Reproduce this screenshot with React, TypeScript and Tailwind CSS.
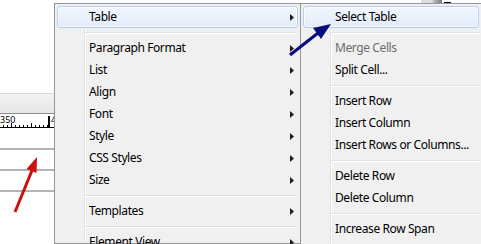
import clsx from 'clsx'

type Entry = { label: string; arrow?: boolean; hl?: boolean; disabled?: boolean } | 'sep'

const MAIN: Entry[] = [
  { label: 'Table', arrow: true, hl: true },
  'sep',
  { label: 'Paragraph Format', arrow: true },
  { label: 'List', arrow: true },
  { label: 'Align', arrow: true },
  { label: 'Font', arrow: true },
  { label: 'Style', arrow: true },
  { label: 'CSS Styles', arrow: true },
  { label: 'Size', arrow: true },
  'sep',
  { label: 'Templates', arrow: true },
  'sep',
  { label: 'Element View', arrow: true },
]

const SUB: Entry[] = [
  { label: 'Select Table', hl: true },
  'sep',
  { label: 'Merge Cells', disabled: true },
  { label: 'Split Cell...' },
  'sep',
  { label: 'Insert Row' },
  { label: 'Insert Column' },
  { label: 'Insert Rows or Columns...' },
  'sep',
  { label: 'Delete Row' },
  { label: 'Delete Column' },
  'sep',
  { label: 'Increase Row Span' },
  { label: 'Increase Column Span' },
]

function Arrow() {
  return (
    <svg width="4" height="7" viewBox="0 0 4 7" className="ml-auto shrink-0">
      <polygon points="0,0 4,3.5 0,7" fill="#1e1e1e" />
    </svg>
  )
}

function Menu({ items, className }: { items: Entry[]; className?: string }) {
  return (
    <div className={clsx('relative border border-[#979797] bg-[#f0f0f0] pt-[2px]', className)}>
      {/* icon gutter line */}
      <div className="absolute top-0 bottom-0 left-[29px] w-[2px] border-l border-[#e2e3e3] bg-white" />
      {items.map((it, i) =>
        it === 'sep' ? (
          <div key={i} className="relative ml-[30px] mr-[2px] h-[9px] pt-[4px]">
            <div className="h-px bg-[#e0e0e0]" />
            <div className="h-px bg-white" />
          </div>
        ) : (
          <div
            key={i}
            className={clsx(
              'relative mx-[2px] flex h-[22px] items-center rounded-[3px] border pl-[31px] pr-[3px] whitespace-nowrap',
              it.hl
                ? 'border-[#aecff7] bg-gradient-to-b from-[#f2f7fd] to-[#e3ecf9] shadow-[inset_0_0_0_1px_rgba(255,255,255,0.7)]'
                : 'border-transparent',
              it.disabled ? 'text-[#6d6d6d]' : 'text-black'
            )}
          >
            <span className="-mt-px">{it.label}</span>
            {it.arrow && <Arrow />}
          </div>
        )
      )}
    </div>
  )
}

function Ruler() {
  const ticks = Array.from({ length: 12 }, (_, i) => i)
  return (
    <div className="relative h-[15px] bg-white">
      <span className="absolute left-0 top-[1px] text-[9px] leading-[10px] text-black">350</span>
      <svg width="54" height="15" className="block">
        <line x1="0" y1="13.5" x2="54" y2="13.5" stroke="#000" />
        {ticks.map((t) => (
          <line key={t} x1={3.5 + t * 4} y1={t % 5 === 2 ? 9 : 11} x2={3.5 + t * 4} y2="14" stroke="#000" />
        ))}
        <rect x="48" y="2" width="2" height="12" fill="#000" />
      </svg>
      <span className="absolute left-[51px] top-[1px] text-[9px] leading-[10px] text-black">4</span>
    </div>
  )
}

export default function App() {
  return (
    <div className="relative flex h-[244px] w-[481px] overflow-hidden bg-white font-['Noto_Sans',sans-serif] text-[12px] tracking-[-0.4px]">
      {/* editor behind the menu */}
      <div className="flex w-[54px] shrink-0 flex-col tracking-normal">
        <div className="h-[93px] bg-white" />
        <div className="h-[21px] border-t border-b border-t-[#d8d8d8] border-b-[#8c8c8c] bg-gradient-to-b from-[#f3f3f3] to-[#e6e6e6]" />
        <Ruler />
        <div className="h-[19px] bg-white" />
        <div className="h-[21px] border-t-2 border-[#b4b4b4] bg-white" />
        <div className="h-[21px] border-t-2 border-[#b4b4b4] bg-white" />
        <div className="flex-1 border-t-2 border-[#b4b4b4] bg-white" />
      </div>

      <Menu items={MAIN} className="mt-[3px] w-[247px] shrink-0" />

      <div className="-ml-px flex flex-1 flex-col">
        <div className="flex h-[3px] shrink-0">
          <div className="w-[121px]" />
          <div className="w-[12px] bg-[#dcdcdc]" />
          <div className="w-[9px] bg-gradient-to-r from-[#bdbdbd] to-[#7a7a7a]" />
          <div className="ml-[2px] mt-[2px] h-px w-[7px] bg-black" />
        </div>
        <Menu items={SUB} className="border-r-0" />
      </div>

      {/* annotation arrows */}
      <svg className="pointer-events-none absolute inset-0" width="481" height="244">
        <line x1="15" y1="212" x2="33" y2="168" stroke="#cc1010" strokeWidth="3" />
        <polygon points="37,157 36.5,173 26.5,169" fill="#cc1010" />
        <line x1="290" y1="55" x2="318" y2="33" stroke="#0b0b80" strokeWidth="3" />
        <polygon points="331,24 321,39 313,28" fill="#0b0b80" />
      </svg>
    </div>
  )
}
